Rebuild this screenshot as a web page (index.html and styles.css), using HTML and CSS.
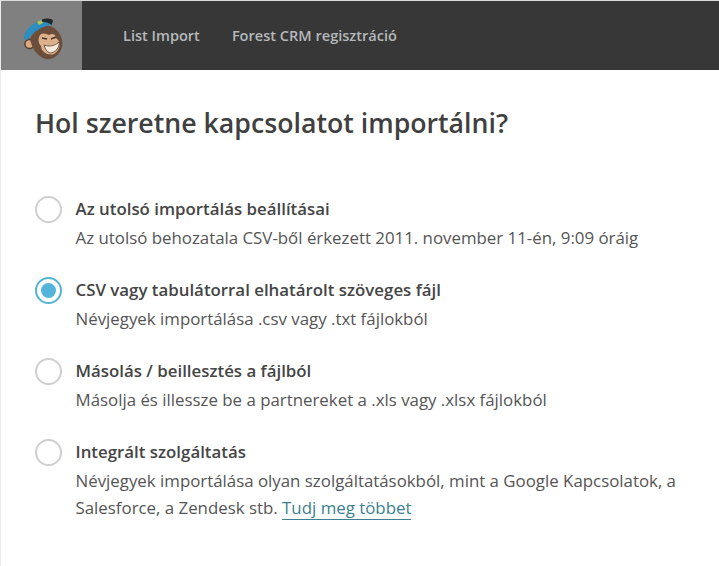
FILE: index.html
```html
<!DOCTYPE html>
<html lang="hu">
<head>
<meta charset="utf-8">
<title>Import</title>
<link rel="stylesheet" href="styles.css">
</head>
<body>
<header class="topbar">
  <a class="logo" href="#">
    <svg class="monkey" width="46" height="46" viewBox="0 0 46 46">
      <circle cx="11.5" cy="30" r="4.6" fill="#d9ab82" stroke="#5a4334" stroke-width="1.6"/>
      <path d="M12 25 C15 17 24 10 32 12 C41 15 46 25 44 33 C42 41 35 46 28 45 C20 43 14 35 12 25Z" fill="#6a4d3a"/>
      <path d="M22 21 C25 18 28 20 31 21 C34 19 38 20 38 24 C43 27 43 36 36 40 C30 42 23 38 23 32 C20 29 20 24 22 21Z" fill="#dcb08a"/>
      <path d="M26 31 C31 33 37 32 41 28 C42 34 37 39 32 39 C29 38 27 35 26 31Z" fill="#f6eadb" stroke="#5a4334" stroke-width=".8"/>
      <path d="M24 24 l5 1 M33 25 l5 -2" stroke="#4a3528" stroke-width="1.4" fill="none"/>
      <path d="M6 23 C7 15 15 9 24 6 C28 5 33 5 34 7 L33 11 C25 12 16 17 10 25 C8 27 6 26 6 23Z" fill="#2b8dc0"/>
      <path d="M24 5.5 C28 4 34 4 35 7 L33.5 11 C32 9 28 8 24 7.5Z" fill="#23262b"/>
      <path d="M19 8 l4 -2 l2 3 l-4 2Z" fill="#b7c24a"/>
    </svg>
  </a>
  <nav class="nav">
    <a class="nav-link" href="#">List Import</a>
    <a class="nav-link" href="#">Forest CRM regisztráció</a>
  </nav>
</header>
<main class="content">
  <h1 class="title">Hol szeretne kapcsolatot importálni?</h1>
  <ul class="options">
    <li class="option">
      <span class="radio"></span>
      <div class="text">
        <div class="label">Az utolsó importálás beállításai</div>
        <div class="desc">Az utolsó behozatala CSV-ből érkezett 2011. november 11-én, 9:09 óráig</div>
      </div>
    </li>
    <li class="option">
      <span class="radio checked"></span>
      <div class="text">
        <div class="label">CSV vagy tabulátorral elhatárolt szöveges fájl</div>
        <div class="desc">Névjegyek importálása .csv vagy .txt fájlokból</div>
      </div>
    </li>
    <li class="option">
      <span class="radio"></span>
      <div class="text">
        <div class="label">Másolás / beillesztés a fájlból</div>
        <div class="desc">Másolja és illessze be a partnereket a .xls vagy .xlsx fájlokból</div>
      </div>
    </li>
    <li class="option">
      <span class="radio"></span>
      <div class="text">
        <div class="label">Integrált szolgáltatás</div>
        <div class="desc">Névjegyek importálása olyan szolgáltatásokból, mint a Google Kapcsolatok, a Salesforce, a Zendesk stb. <a class="more" href="#">Tudj meg többet</a></div>
      </div>
    </li>
  </ul>
</main>
</body>
</html>
```
FILE: styles.css
```css
* { box-sizing: border-box; }
html, body { margin: 0; padding: 0; }
body {
  height: 566px;
  overflow: hidden;
  background: #fff;
  font-family: "Open Sans", sans-serif;
  color: #4d4d4d;
  border-left: 1px solid #ececec;
}
.topbar {
  display: flex;
  height: 70px;
  margin-left: -1px;
  background: #373737;
  border-top: 1px solid #dcdcdc;
}
.logo {
  display: flex;
  align-items: center;
  justify-content: center;
  width: 82px;
  padding-top: 2px;
  background: #808080;
}
.nav {
  display: flex;
  align-items: center;
  gap: 32px;
  padding: 0 0 2px 41px;
}
.nav-link {
  font-size: 14.55px;
  font-weight: 600;
  color: #b5b8ba;
  text-decoration: none;
}
.content { padding: 35px 34px 0; }
.title {
  margin: 0;
  font-size: 26.7px;
  line-height: 36px;
  font-weight: 600;
  color: #404040;
}
.options {
  list-style: none;
  margin: 54px 0 0;
  padding: 0;
  display: flex;
  flex-direction: column;
  gap: 25px;
}
.option {
  display: flex;
  gap: 13.5px;
}
.radio {
  flex: none;
  width: 27px;
  height: 27px;
  margin-top: 1px;
  border: 2px solid #cfcfcf;
  border-radius: 50%;
  background: #fff;
}
.radio.checked {
  border-color: #52b4d2;
  padding: 4px;
}
.radio.checked::before {
  content: "";
  display: block;
  width: 15px;
  height: 15px;
  border-radius: 50%;
  background: #52b4d9;
}
.text { flex: 1; }
.label {
  font-size: 16.85px;
  line-height: 27px;
  margin-bottom: 2px;
  font-weight: 600;
  color: #454545;
}
.desc {
  font-size: 16.85px;
  line-height: 27px;
  color: #555;
}
.more {
  color: #3d7f8f;
  text-decoration: none;
  border-bottom: 1px solid #3d7f8f;
}
```
